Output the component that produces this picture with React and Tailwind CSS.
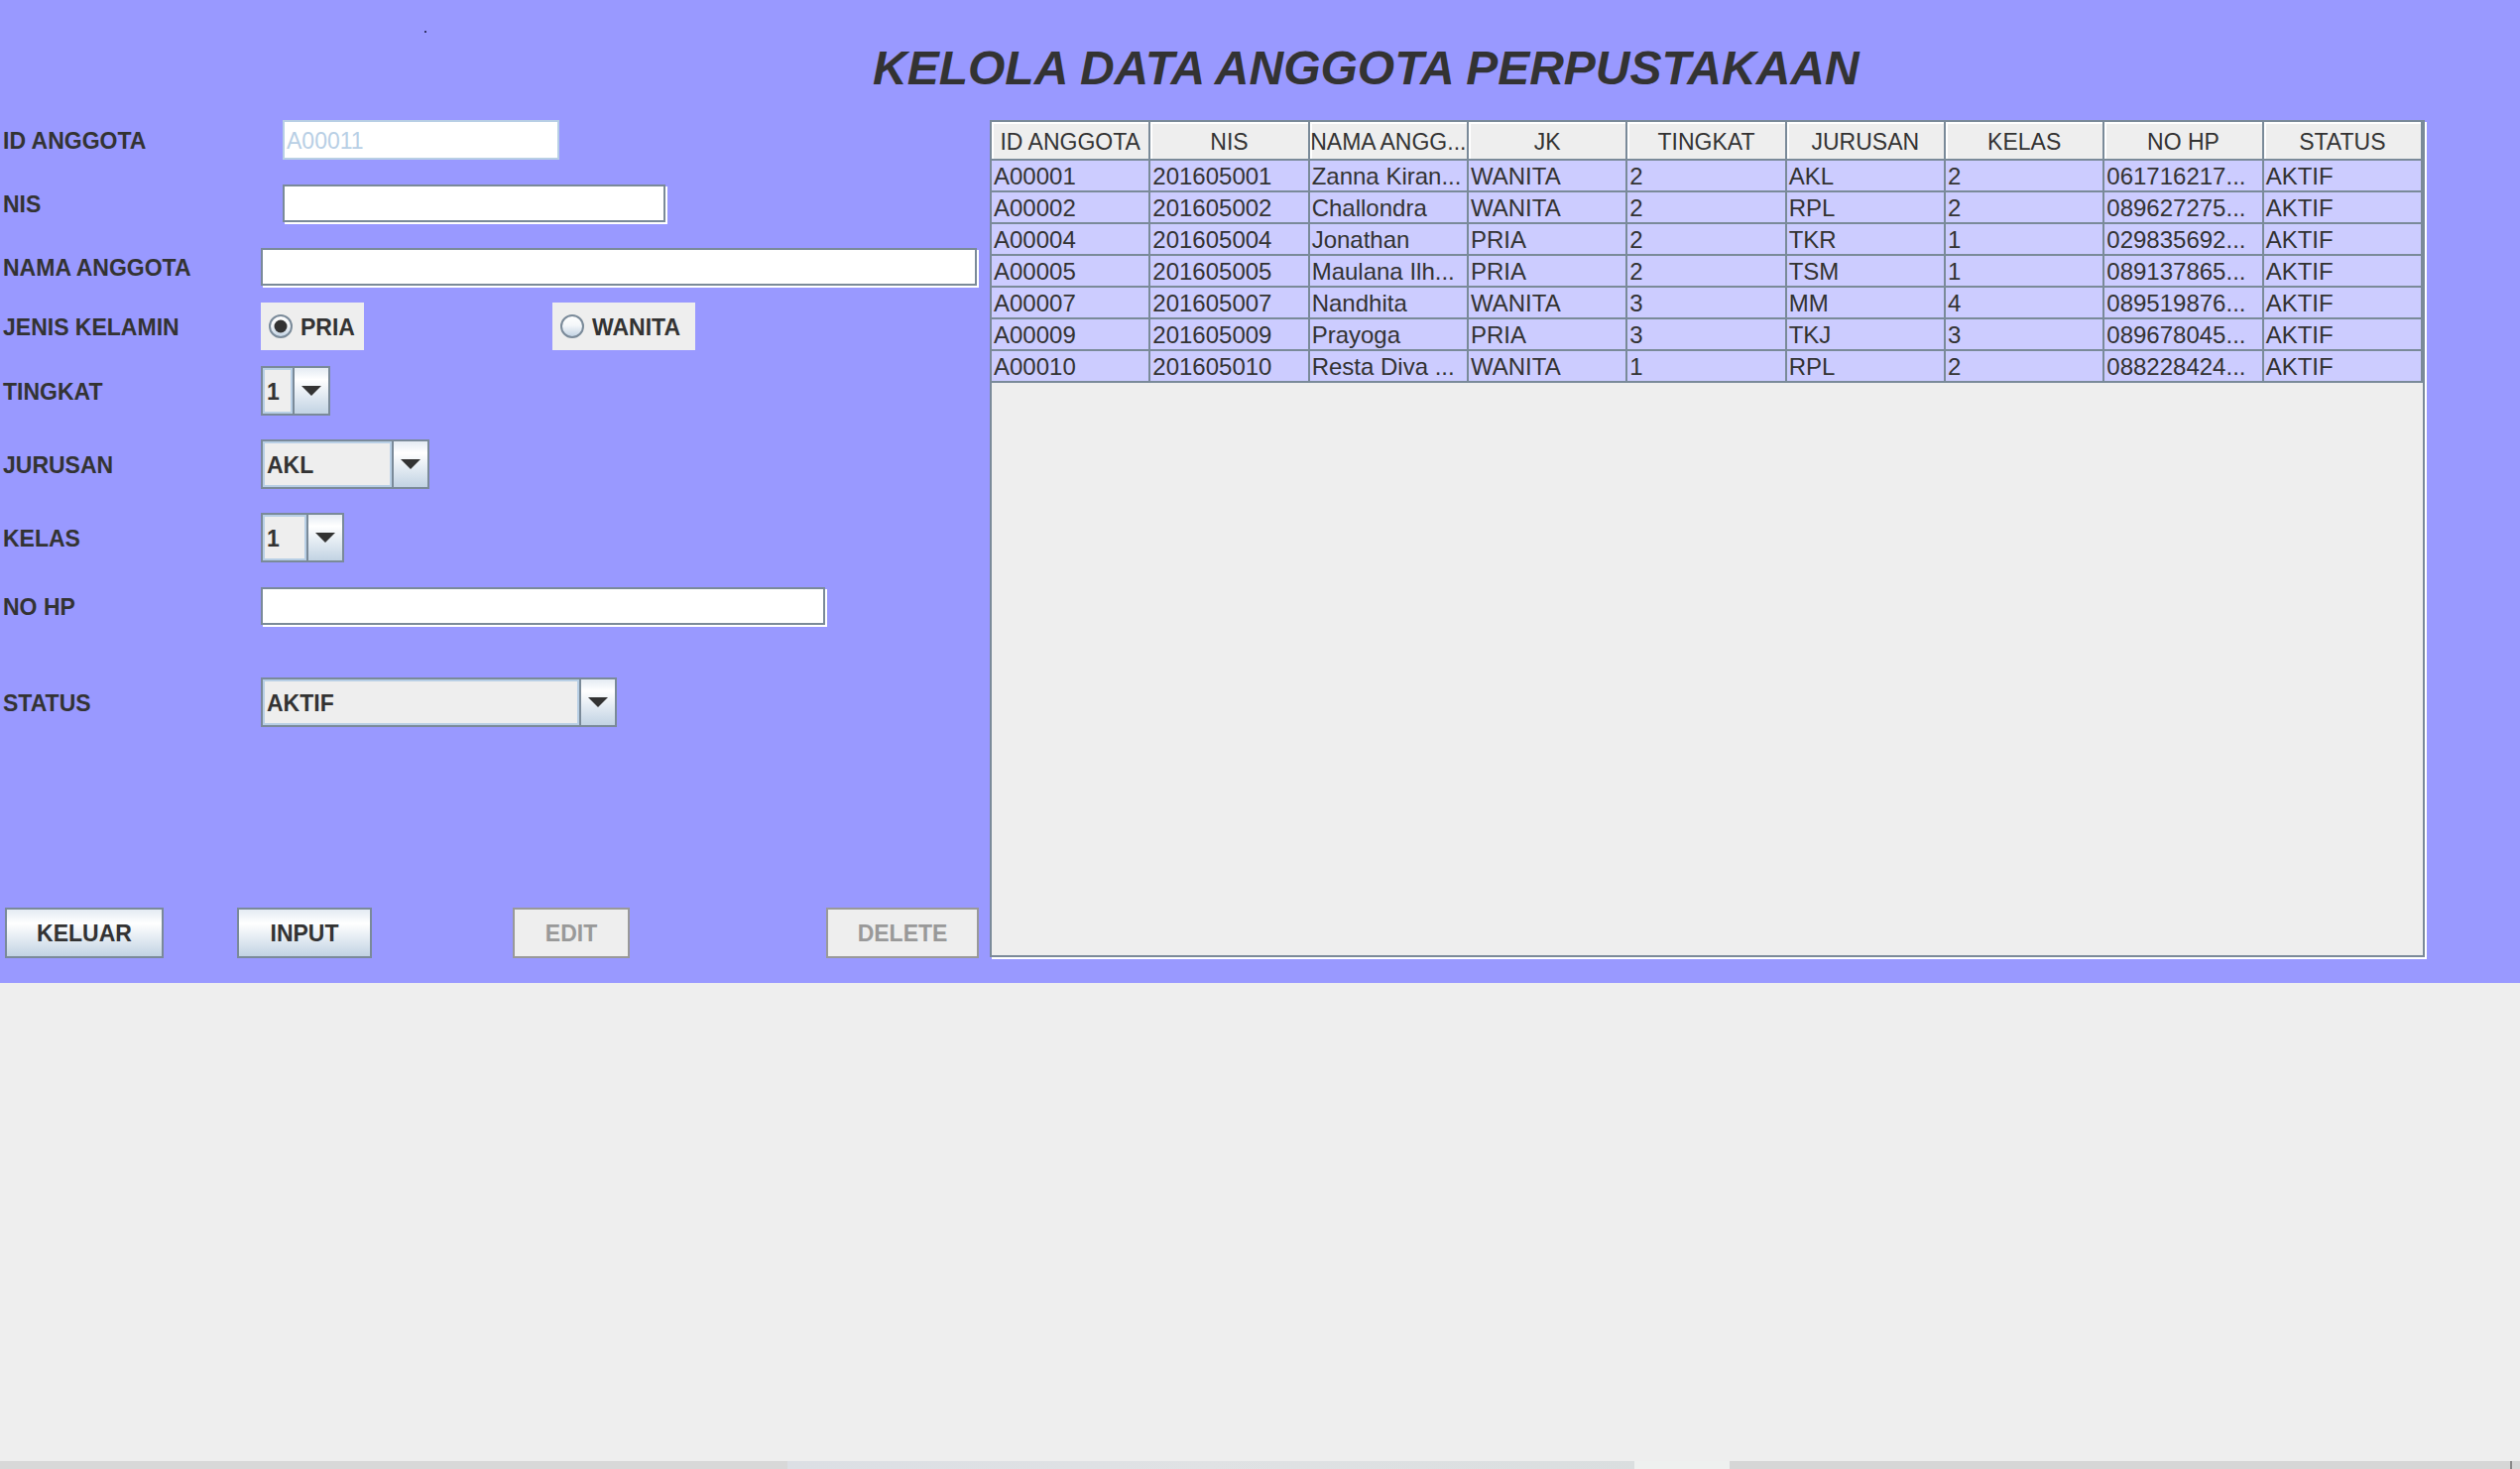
import React from "react"

const headers = ["ID ANGGOTA", "NIS", "NAMA ANGG...", "JK", "TINGKAT", "JURUSAN", "KELAS", "NO HP", "STATUS"]

const rows = [
  ["A00001", "201605001", "Zanna Kiran...", "WANITA", "2", "AKL", "2", "061716217...", "AKTIF"],
  ["A00002", "201605002", "Challondra", "WANITA", "2", "RPL", "2", "089627275...", "AKTIF"],
  ["A00004", "201605004", "Jonathan", "PRIA", "2", "TKR", "1", "029835692...", "AKTIF"],
  ["A00005", "201605005", "Maulana Ilh...", "PRIA", "2", "TSM", "1", "089137865...", "AKTIF"],
  ["A00007", "201605007", "Nandhita", "WANITA", "3", "MM", "4", "089519876...", "AKTIF"],
  ["A00009", "201605009", "Prayoga", "PRIA", "3", "TKJ", "3", "089678045...", "AKTIF"],
  ["A00010", "201605010", "Resta Diva ...", "WANITA", "1", "RPL", "2", "088228424...", "AKTIF"],
]

const Arrow = () => (
  <svg width="20" height="10" viewBox="0 0 20 10">
    <path d="M0 0h20L10 10z" fill="#333333" />
  </svg>
)

function Label({ text, width }) {
  return (
    <div className={`pl-[3px] pt-[2px] text-[23px] font-bold leading-none text-[#333333] ${width}`}>{text}</div>
  )
}

function Combo({ value, width }) {
  return (
    <div className={`flex h-[50px] border-2 border-[#7a8a99] ${width}`}>
      <div className="flex flex-1 items-center border-2 border-[#b8cfe5] bg-[#eeeeee] pl-[2px] pt-[2px] text-[23px] font-bold leading-none text-[#333333]">
        {value}
      </div>
      <div className="flex w-[36px] items-center justify-center border-l-2 border-[#7a8a99] bg-linear-to-b from-[#e4ebf3] via-white via-25% to-[#c2d3e3]">
        <Arrow />
      </div>
    </div>
  )
}

function Radio({ label, checked, width }) {
  const id = checked ? "rg-on" : "rg-off"
  return (
    <div className={`flex h-[48px] items-center bg-[#eeeeee] pl-[8px] ${width}`}>
      <svg width="24" height="24" viewBox="0 0 24 24">
        <defs>
          <linearGradient id={id} x1="0" y1="0" x2="0" y2="1">
            <stop offset="0" stopColor="#ffffff" />
            <stop offset="0.45" stopColor="#f4f7fa" />
            <stop offset="1" stopColor="#bfd0e1" />
          </linearGradient>
        </defs>
        <circle cx="12" cy="12" r="11" fill={`url(#${id})`} stroke="#7a8a99" strokeWidth="2" />
        {checked && <circle cx="12" cy="12" r="6.5" fill="#333333" />}
      </svg>
      <span className="ml-[8px] pt-[2px] text-[23px] font-bold leading-none text-[#333333]">{label}</span>
    </div>
  )
}

export default function App() {
  return (
    <div className="flex h-[1481px] w-full flex-col bg-[#eeeeee] font-['Liberation_Sans',Arial,sans-serif] text-[#333333]">
      {/* Main panel */}
      <div className="flex h-[991px] flex-col bg-[#9999ff]">
        {/* Title */}
        <div className="flex h-[121px]">
          <span className="ml-[428px] mt-[31px] h-[2px] w-[2px] bg-[#333366]" />
          <h1 className="ml-[450px] mt-[45px] text-[48px] font-bold italic leading-none text-[#333333]">
            KELOLA DATA ANGGOTA PERPUSTAKAAN
          </h1>
        </div>

        <div className="flex">
          {/* Form */}
          <div className="flex w-[998px] flex-col">
            <div className="flex h-[40px] items-center">
              <Label text="ID ANGGOTA" width="w-[285px]" />
              <div className="flex h-[40px] w-[279px] items-center border-2 border-[#b8cfe5] bg-white pl-[2px] pt-[2px] text-[23px] leading-none text-[#b8cfe5]">
                A00011
              </div>
            </div>

            <div className="mt-[24px] flex h-[40px] items-center">
              <Label text="NIS" width="w-[285px]" />
              <div className="h-[38px] w-[386px] border-2 border-[#7a8a99] bg-white shadow-[2px_2px_0_#ffffff]" />
            </div>

            <div className="mt-[24px] flex h-[40px] items-center">
              <Label text="NAMA ANGGOTA" width="w-[263px]" />
              <div className="h-[38px] w-[722px] border-2 border-[#7a8a99] bg-white shadow-[2px_2px_0_#ffffff]" />
            </div>

            <div className="mt-[16px] flex h-[48px] items-center">
              <Label text="JENIS KELAMIN" width="w-[263px]" />
              <Radio label="PRIA" checked width="w-[104px]" />
              <div className="ml-[190px]">
                <Radio label="WANITA" width="w-[144px]" />
              </div>
            </div>

            <div className="mt-[16px] flex h-[50px] items-center">
              <Label text="TINGKAT" width="w-[263px]" />
              <Combo value="1" width="w-[70px]" />
            </div>

            <div className="mt-[24px] flex h-[50px] items-center">
              <Label text="JURUSAN" width="w-[263px]" />
              <Combo value="AKL" width="w-[170px]" />
            </div>

            <div className="mt-[24px] flex h-[50px] items-center">
              <Label text="KELAS" width="w-[263px]" />
              <Combo value="1" width="w-[84px]" />
            </div>

            <div className="mt-[24px] flex h-[40px] items-center">
              <Label text="NO HP" width="w-[263px]" />
              <div className="h-[38px] w-[569px] border-2 border-[#7a8a99] bg-white shadow-[2px_2px_0_#ffffff]" />
            </div>

            <div className="mt-[52px] flex h-[50px] items-center">
              <Label text="STATUS" width="w-[263px]" />
              <Combo value="AKTIF" width="w-[359px]" />
            </div>

            {/* Buttons */}
            <div className="mt-[182px] flex h-[51px] text-[23px] font-bold leading-none">
              <button className="ml-[5px] w-[160px] border-2 border-[#7a8a99] bg-linear-to-b from-[#e4ebf3] via-white via-30% to-[#c2d3e3] pt-[2px] text-[#333333]">
                KELUAR
              </button>
              <button className="ml-[74px] w-[136px] border-2 border-[#7a8a99] bg-linear-to-b from-[#e4ebf3] via-white via-30% to-[#c2d3e3] pt-[2px] text-[#333333]">
                INPUT
              </button>
              <button className="ml-[142px] w-[118px] border-2 border-[#999999] bg-[#eeeeee] pt-[2px] text-[#999999]">
                EDIT
              </button>
              <button className="ml-[198px] w-[154px] border-2 border-[#999999] bg-[#eeeeee] pt-[2px] text-[#999999]">
                DELETE
              </button>
            </div>
          </div>

          {/* Table */}
          <div className="h-[844px] w-[1447px] border-2 border-[#7a8a99] bg-[#eeeeee] shadow-[2px_2px_0_#ffffff]">
            <div className="grid grid-cols-9">
              {headers.map((h) => (
                <div
                  key={h}
                  className="flex h-[39px] items-center justify-center overflow-hidden whitespace-nowrap border-b-2 border-r-2 border-[#7a8a99] bg-[#eeeeee] pt-[4px] text-[23px] leading-none shadow-[inset_2px_2px_0_#ffffff]"
                >
                  {h}
                </div>
              ))}
              {rows.map((r, i) =>
                r.map((c, j) => (
                  <div
                    key={`${i}-${j}`}
                    className="flex h-[32px] items-center overflow-hidden whitespace-nowrap border-b-2 border-r-2 border-[#7a8a99] bg-[#ccccff] pl-[2px] pt-[2px] text-[24px] leading-none"
                  >
                    {c}
                  </div>
                ))
              )}
            </div>
          </div>
        </div>
      </div>

      <div className="flex-1" />

      {/* Bottom strip */}
      <div className="flex h-[8px]">
        <div className="w-[794px] bg-[#d8d8d8]" />
        <div className="w-[854px] bg-linear-to-r from-[#dcdfe4] via-[#e0e2e4] to-[#dadedf]" />
        <div className="w-[96px] bg-[#eef0ef]" />
        <div className="w-[787px] bg-[#d6d6d6]" />
        <div className="w-[2px] bg-[#888888]" />
        <div className="flex-1 bg-[#d6d6d6]" />
      </div>
    </div>
  )
}
